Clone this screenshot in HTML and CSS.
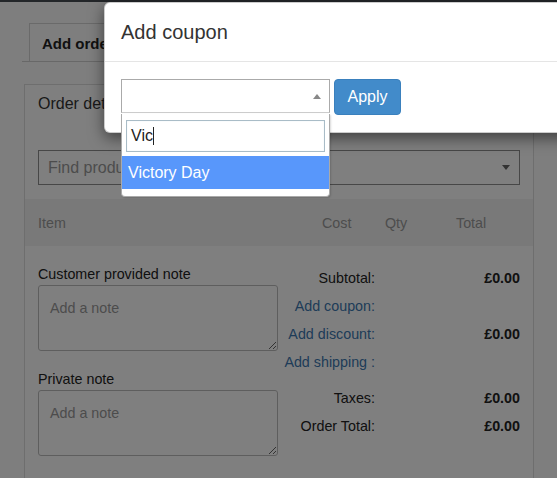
FILE: index.html
```html
<!DOCTYPE html>
<html>
<head>
<meta charset="utf-8">
<link rel="stylesheet" href="styles.css">
</head>
<body>
<div class="adminbar"></div>
<div class="page">
  <div class="tabs">
    <div class="tab">Add order</div>
  </div>
  <div class="panel">
    <div class="panel-heading">Order details</div>
    <div class="panel-body">
      <div class="find-select">
        <span class="find-placeholder">Find products...</span>
        <span class="arrow-down"></span>
      </div>
    </div>
    <div class="items-head">
      <span class="col-item">Item</span>
      <span class="col-cost">Cost</span>
      <span class="col-qty">Qty</span>
      <span class="col-total">Total</span>
    </div>
    <div class="bottom">
      <div class="notes">
        <label class="note-label">Customer provided note</label>
        <textarea class="note" placeholder="Add a note"></textarea>
        <label class="note-label second">Private note</label>
        <textarea class="note" placeholder="Add a note"></textarea>
      </div>
      <div class="totals">
        <span class="t-label">Subtotal:</span><span class="t-value">£0.00</span>
        <a class="t-label link">Add coupon:</a><span class="t-value"></span>
        <a class="t-label link">Add discount:</a><span class="t-value">£0.00</span>
        <a class="t-label link">Add shipping :</a><span class="t-value"></span>
        <span class="t-label low">Taxes:</span><span class="t-value low">£0.00</span>
        <span class="t-label">Order Total:</span><span class="t-value">£0.00</span>
      </div>
    </div>
  </div>
</div>

<div class="backdrop"></div>

<div class="modal">
  <div class="modal-header">
    <h4 class="modal-title">Add coupon</h4>
  </div>
  <div class="modal-body">
    <div class="coupon-select">
      <span class="arrow-up"></span>
    </div>
    <button class="btn-apply">Apply</button>
  </div>
</div>

<div class="dropdown">
  <div class="search"><span class="search-text">Vic</span><span class="caret"></span></div>
  <ul class="results">
    <li class="option highlighted">Victory Day</li>
  </ul>
</div>
</body>
</html>
```

FILE: styles.css
```css
* { box-sizing: border-box; }
html, body { margin: 0; padding: 0; }
body {
  font-family: "Liberation Sans", Arial, sans-serif;
  color: #333;
  background: #fdfdfd;
  width: 557px;
  height: 478px;
  overflow: hidden;
  position: relative;
}
.adminbar { height: 2px; background: #474d52; }
.page { padding: 21px 0 0 22px; }
.tabs {
  display: flex;
  border-bottom: 1px solid #d0d0d0;
  padding-left: 7px;
  width: 535px;
}
.tab {
  border: 1px solid #d4d4d4;
  border-bottom: none;
  height: 38px;
  line-height: 38px;
  padding: 1px 30px 0 12px;
  font-weight: bold;
  font-size: 15px;
  color: #222;
  background: #fdfdfd;
}
.panel {
  margin: 22px 0 0 2px;
  width: 510px;
  border: 1px solid #dcdcdc;
  border-bottom: none;
  background: #fff;
  height: 420px;
}
.panel-heading {
  padding: 9px 13px 0;
  line-height: 20px;
  font-size: 16px;
  color: #333;
}
.panel-body { padding: 36px 13px 0; }
.find-select {
  height: 35px;
  border: 1px solid #8e8e8e;
  display: flex;
  align-items: center;
  padding: 0 9px;
  justify-content: space-between;
}
.find-placeholder { font-size: 16px; color: #999; }
.arrow-down {
  width: 0; height: 0;
  border-left: 4px solid transparent;
  border-right: 4px solid transparent;
  border-top: 5px solid #666;
}
.items-head {
  margin-top: 14px;
  height: 47px;
  background: #f3f3f3;
  display: flex;
  align-items: center;
  font-size: 14.3px;
  color: #9a9a9a;
}
.col-item { margin-left: 13px; width: 284px; }
.col-cost { width: 63px; }
.col-qty { width: 71px; }
.bottom {
  display: flex;
  padding: 18px 13px 0;
}
.notes { width: 240px; display: flex; flex-direction: column; }
.note-label {
  font-size: 14.3px;
  line-height: 20px;
  color: #222;
  margin-bottom: 1px;
}
.note-label.second { margin-top: 18px; }
.note {
  width: 240px;
  height: 66px;
  border: 1px solid #bdbdbd;
  border-radius: 3px;
  padding: 12px 11px;
  font-family: "Liberation Sans", Arial, sans-serif;
  font-size: 14.3px;
  line-height: 20px;
  background: #fff;
  resize: both;
  display: block;
}
.note::placeholder { color: #999; }
.totals {
  flex: 1;
  display: grid;
  grid-template-columns: 1fr 145px;
  grid-template-rows: 28px 28px 28px 28px 36px 28px;
  font-size: 14.3px;
  align-items: center;
}
.t-label { text-align: right; color: #222; white-space: nowrap; }
.t-value { text-align: right; font-weight: bold; color: #222; }
.link { color: #3d78b0; }
.low { align-self: end; line-height: 28px; }

.backdrop {
  position: absolute;
  inset: 0;
  background: rgba(0, 0, 0, 0.5);
}
.modal {
  position: absolute;
  left: 104px;
  top: 2px;
  width: 600px;
  background: #fff;
  border: 1px solid rgba(0,0,0,.2);
  border-radius: 6px;
  box-shadow: 0 5px 15px rgba(0,0,0,.5);
}
.modal-header {
  padding: 15px 16px;
  border-bottom: 1px solid #e5e5e5;
}
.modal-title {
  margin: 0;
  font-size: 20px;
  font-weight: normal;
  line-height: 28px;
  color: #333;
}
.modal-body {
  display: flex;
  gap: 4px;
  padding: 17px 16px 17px;
}
.coupon-select {
  width: 209px;
  height: 34px;
  border: 1px solid #aaa;
  border-bottom-color: #ccc;
  display: flex;
  align-items: center;
  justify-content: flex-end;
  padding-right: 8px;
}
.arrow-up {
  width: 0; height: 0;
  border-left: 4px solid transparent;
  border-right: 4px solid transparent;
  border-bottom: 5px solid #888;
}
.btn-apply {
  width: 67px;
  height: 36px;
  background: #428bca;
  border: 1px solid #3a80bd;
  border-radius: 4px;
  color: #fff;
  font-family: "Liberation Sans", Arial, sans-serif;
  font-size: 16px;
  padding: 0;
}
.dropdown {
  position: absolute;
  left: 121px;
  top: 114px;
  width: 209px;
  background: #fff;
  border: 1px solid #aaa;
  border-top: none;
  padding: 6px 4px 0;
  box-shadow: 1px 1px 2px rgba(0,0,0,.15);
  border-radius: 0 0 4px 4px;
}
.search {
  height: 32px;
  border: 1px solid #a9bcc7;
  box-shadow: inset 0 0 1px #c6dbe6;
  display: flex;
  align-items: center;
  padding-left: 4px;
  font-size: 16px;
  color: #222;
}
.caret { width: 1px; height: 18px; background: #222; }
.results { list-style: none; margin: 4px -4px 0; padding: 0 0 7px; }
.option {
  height: 33px;
  line-height: 34px;
  padding: 0 6px;
  font-size: 16px;
}
.highlighted { background: #5897fb; color: #fff; }
```
